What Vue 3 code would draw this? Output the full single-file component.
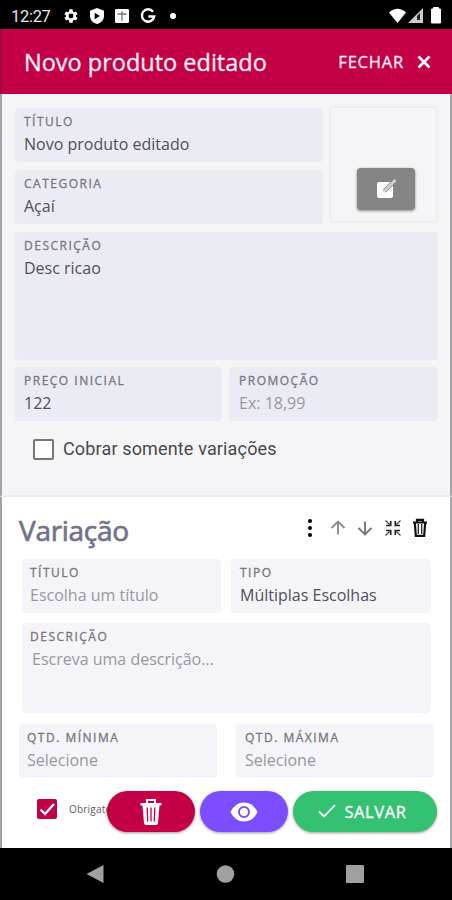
<template>
    <div class="phone">

        <div class="status-bar">
            <span class="clock">12:27</span>
            <svg class="status-icon" viewBox="0 0 24 24">
                <path fill="#fff" fill-rule="evenodd" d="M19.4 13l.1-1-.1-1 2.4-1.8-2.3-4-2.8 1.2-1.8-1L14.500 2h-5l-.4 3.400-1.800 1L4.500 5.200l-2.300 4L4.600 11l-.1 1 .1 1-2.400 1.800 2.300 4 2.800-1.200 1.800 1 .4 3.400h5l.4-3.400 1.800-1 2.800 1.200 2.300-4zM12 15.700a3.700 3.700 0 1 1 0-7.400 3.700 3.700 0 0 1 0 7.400z" />
            </svg>
            <svg class="status-icon" viewBox="0 0 24 24">
                <path fill="#fff" fill-rule="evenodd" d="M12 0L1.500 4v8c0 6 4.500 10.500 10.500 12 6-1.500 10.500-6 10.500-12V4zM8.500 7l8 5-8 5z" />
            </svg>
            <svg class="status-icon" viewBox="0 0 24 24">
                <rect x="1.500" y="1.500" width="21" height="21" rx="2" fill="#fff" />
                <path d="M5 9h14M12 5v14" stroke="#777" stroke-width="2" />
            </svg>
            <svg class="status-icon" viewBox="0 0 24 24">
                <path d="M19.500 5.500A9.300 9.300 0 1 0 21.300 12.800H12.500" fill="none" stroke="#fff" stroke-width="3.600" />
            </svg>
            <span class="status-dot"></span>
            <svg class="signals" viewBox="0 0 54 18">
                <path d="M0 5.500Q8.500-2 17 5.500L8.500 16z" fill="#fff" />
                <path d="M19 16L34 1V16z" fill="#ccc" />
                <path d="M28 13V9l3-3v7z" fill="#222" />
                <path d="M42.500 2h2V.5h5V2h2v14h-9z" fill="#fff" stroke="#fff" stroke-linejoin="round" />
            </svg>
        </div>

        <header class="header">
            <h1>Novo produto editado</h1>
            <button class="close">
                <span>FECHAR</span>
                <svg width="14" height="14" viewBox="0 0 14 14">
                    <path d="M1.500 1.500l11 11M12.500 1.500l-11 11" stroke="#fff" stroke-width="2.600" />
                </svg>
            </button>
        </header>

        <section class="product">
            <div class="top-row">
                <div class="column">
                    <div v-for="field in mainFields" :key="field.label" class="field">
                        <label>{{ field.label }}</label>
                        <p>{{ field.value }}</p>
                    </div>
                </div>
                <div class="picture">
                    <button class="edit">
                        <svg width="22" height="22" viewBox="0 0 22 22">
                            <rect x="2" y="4" width="16" height="16" rx="2" fill="#fff" />
                            <path d="M9.500 13L19 3.500" stroke="#858585" stroke-width="4.200" />
                            <path d="M8.500 14L20.500 2" stroke="#d4d4d4" stroke-width="2.600" />
                        </svg>
                    </button>
                </div>
            </div>
            <div class="field tall">
                <label>DESCRIÇÃO</label>
                <p>Desc ricao</p>
            </div>
            <div class="prices">
                <div v-for="field in priceFields" :key="field.label" class="field">
                    <label>{{ field.label }}</label>
                    <p :class="{ placeholder: !field.value }">{{ field.value || field.placeholder }}</p>
                </div>
            </div>
            <div class="only-variations">
                <span class="checkbox"></span>
                <span>Cobrar somente variações</span>
            </div>
        </section>

        <section class="variation">
            <div class="variation-head">
                <h2>Variação</h2>
                <div class="tools">
                    <svg viewBox="0 0 20 20">
                        <circle cx="10" cy="3" r="2" /><circle cx="10" cy="10" r="2" /><circle cx="10" cy="17" r="2" />
                    </svg>
                    <svg viewBox="0 0 20 20">
                        <path d="M10 16.500V4M3.500 10L10 3.500l6.500 6.500" fill="none" stroke="#8c8c8c" stroke-width="1.900" />
                    </svg>
                    <svg viewBox="0 0 20 20">
                        <path d="M10 3.500V16M3.500 10l6.500 6.500 6.500-6.500" fill="none" stroke="#777" stroke-width="1.900" />
                    </svg>
                    <svg viewBox="0 0 20 20">
                        <path d="M3 7.500h4.700V3M17 7.500h-4.700V3M3 12.500h4.700V17M17 12.500h-4.700V17" fill="none" stroke="#222" stroke-width="1.700" />
                        <path d="M2.500 2.500l5 5M17.500 2.500l-5 5M2.500 17.500l5-5M17.500 17.500l-5-5" stroke="#444" stroke-width="1.200" />
                    </svg>
                    <svg viewBox="0 0 20 20">
                        <path d="M3 4.500h14M7 4V1.800h6V4M4.800 5l1 12.800h8.400l1-12.800" fill="none" stroke="#111" stroke-width="2.200" />
                        <path d="M8.300 6v10M11.700 6v10" stroke="#333" stroke-width="1.400" />
                    </svg>
                </div>
            </div>
            <div class="variation-row">
                <div class="field light">
                    <label>TÍTULO</label>
                    <p class="placeholder">Escolha um título</p>
                </div>
                <div class="field light type">
                    <label>TIPO</label>
                    <p>Múltiplas Escolhas</p>
                </div>
            </div>
            <div class="field light description">
                <label>DESCRIÇÃO</label>
                <p class="placeholder">Escreva uma descrição...</p>
            </div>
            <div class="quantities">
                <div v-for="label in quantities" :key="label" class="field light">
                    <label>{{ label }}</label>
                    <p class="placeholder">Selecione</p>
                </div>
            </div>
            <div class="required">
                <span class="checkbox checked">
                    <svg width="20" height="20" viewBox="0 0 20 20">
                        <path d="M3.500 10.500l4.500 4.500L17 5" fill="none" stroke="#fff" stroke-width="2.300" />
                    </svg>
                </span>
                <span>Obrigatório</span>
            </div>
        </section>

        <div class="actions">
            <button class="pill delete">
                <svg width="24" height="28" viewBox="0 0 24 28">
                    <path d="M1.500 5h21v2.500h-2L19 25q-.2 2-2 2H7q-1.800 0-2-2L3.500 7.500h-2z" fill="#fff" />
                    <path d="M8 5V2h8v3" fill="none" stroke="#fff" stroke-width="2" />
                    <path d="M8.200 9.500l.5 14M12 9.500v14M15.800 9.500l-.5 14" stroke="#c30046" stroke-width="1.300" />
                </svg>
            </button>
            <button class="pill preview">
                <svg width="28" height="20" viewBox="0 0 28 20">
                    <path d="M.5 10Q5 .5 14 .5T27.500 10Q23 19.500 14 19.500T.5 10z" fill="#fff" />
                    <circle cx="14" cy="10" r="5" fill="none" stroke="#7c4dff" stroke-width="2" />
                </svg>
            </button>
            <button class="pill save">
                <svg width="18" height="16" viewBox="0 0 18 16">
                    <path d="M1 8.500l5 5L17 2" fill="none" stroke="#fff" stroke-width="1.800" />
                </svg>
                <span>SALVAR</span>
            </button>
        </div>

        <nav class="nav-bar">
            <svg width="20" height="20" viewBox="0 0 20 20"><path d="M1.500 10L18.500 1v18z" /></svg>
            <svg width="20" height="20" viewBox="0 0 20 20"><circle cx="10.500" cy="10" r="8.800" /></svg>
            <svg width="20" height="20" viewBox="0 0 20 20"><rect x="1" y="1" width="18" height="18" rx="1" /></svg>
        </nav>

    </div>
</template>


<script setup>
    import { ref } from "vue";

    const mainFields = ref([
        { label: "TÍTULO", value: "Novo produto editado" },
        { label: "CATEGORIA", value: "Açaí" },
    ]);
    const priceFields = ref([
        { label: "PREÇO INICIAL", value: "122" },
        { label: "PROMOÇÃO", value: "", placeholder: "Ex: 18,99" },
    ]);
    const quantities = ["QTD. MÍNIMA", "QTD. MÁXIMA"];
</script>


<style>
body {
    background: #000;
}
</style>

<style scoped>
* {
    box-sizing: border-box;
}
.phone {
    position: relative;
    width: 452px;
    height: 900px;
    overflow: hidden;
    display: flex;
    flex-direction: column;
    background: #000;
    font-family: "Open Sans", "Noto Sans", sans-serif;
}
svg {
    display: block;
    flex: none;
}
h1, h2, p {
    margin: 0;
    font-weight: 400;
}
button {
    border: 0;
    padding: 0;
    font-family: inherit;
    color: #fff;
    display: flex;
    align-items: center;
    justify-content: center;
}

.status-bar {
    height: 29px;
    padding: 3px 9px 0 11px;
    display: flex;
    align-items: center;
    color: #e8e8e8;
}
.clock {
    width: 52px;
    font: 16.5px Roboto, sans-serif;
    letter-spacing: -0.3px;
}
.status-icon {
    width: 16px;
    height: 16px;
    margin-right: 9.500px;
}
.status-dot {
    width: 6px;
    height: 6px;
    margin-left: 5px;
    border-radius: 50%;
    background: #fff;
}
.signals {
    width: 54px;
    height: 18px;
    margin-left: auto;
}

.header {
    height: 65px;
    padding: 0 21px 0 22px;
    border-left: 2px solid #a3063f;
    display: flex;
    align-items: center;
    justify-content: space-between;
    background: #c30046;
    color: #ffeef2;
}
.header h1 {
    font-size: 23.500px;
    line-height: 32px;
    -webkit-text-stroke: 0.3px;
}
.close {
    gap: 13px;
    background: none;
    color: #ffeef2;
    font-size: 16.500px;
    letter-spacing: 0.8px;
    -webkit-text-stroke: 0.3px;
}

.product {
    height: 403px;
    padding: 14px 12px 0 13px;
    border-left: 2px solid #a5a5a7;
    border-right: 2px solid #a5a5a7;
    border-bottom: 2px solid #ececee;
    background: #f5f5f8;
}
.top-row {
    display: flex;
    gap: 6px;
}
.column {
    flex: 1;
    display: flex;
    flex-direction: column;
    gap: 8px;
}
.field {
    height: 54px;
    padding: 5px 9px 0;
    border-radius: 4px;
    background: #ebebf4;
    color: #505057;
}
.field label {
    display: block;
    font-size: 12px;
    line-height: 18px;
    letter-spacing: 1.5px;
    -webkit-text-stroke: 0.3px;
    color: #77777d;
}
.field p {
    font-size: 16px;
    line-height: 22px;
    margin-top: 2px;
    white-space: nowrap;
}
.field .placeholder {
    color: #98989f;
}
.picture {
    width: 109px;
    height: 117px;
    margin-top: -2px;
    padding: 0 0 11px 4px;
    border: 2px solid #eeeeef;
    border-radius: 4px;
    display: flex;
    align-items: flex-end;
    justify-content: center;
}
.edit {
    width: 58px;
    height: 42px;
    border-radius: 4px;
    background: #858585;
    box-shadow: 0 1px 3px rgba(0, 0, 0, 0.45);
}
.tall {
    height: 128px;
    margin-top: 8px;
}
.prices {
    display: grid;
    grid-template-columns: 207px 209px;
    gap: 7px;
    margin-top: 7px;
}
.prices .field:last-child {
    padding-left: 10px;
}
.only-variations {
    display: flex;
    align-items: center;
    gap: 9px;
    margin: 17px 0 0 18px;
    font: 18px/22px Roboto, sans-serif;
    letter-spacing: 0.15px;
    color: #48484c;
}
.checkbox {
    width: 21px;
    height: 21px;
    border: 2px solid #77777a;
    border-radius: 2px;
    background: #fff;
}

.variation {
    height: 351px;
    padding: 15px 15px 0 17px;
    border-left: 2px solid #a5a5a7;
    border-right: 2px solid #a5a5a7;
    background: #fff;
}
.variation-head {
    height: 47px;
    display: flex;
    justify-content: space-between;
}
.variation-head h2 {
    font-size: 28px;
    line-height: 37px;
    letter-spacing: -0.3px;
    -webkit-text-stroke: 0.7px;
    color: #72728b;
}
.tools {
    display: flex;
    gap: 7.500px;
    padding: 6px 5px 0 0;
}
.tools svg {
    width: 20px;
    height: 20px;
}
.light {
    background: #f4f4f9;
}
.variation-row {
    display: grid;
    grid-template-columns: 199px 200px;
    gap: 10px;
    margin-left: 3px;
}
.field.light {
    padding-left: 8px;
}
.field.type {
    padding-left: 9px;
}
.description {
    width: 409px;
    height: 90px;
    margin: 10px 0 0 3px;
}
.description p {
    padding-left: 2px;
}
.quantities {
    display: grid;
    grid-template-columns: 198px 198px;
    gap: 19px;
    margin-top: 11px;
}
.quantities .field:last-child {
    padding-left: 9px;
}
.required {
    display: flex;
    align-items: center;
    gap: 12px;
    margin: 21px 0 0 18px;
    font-size: 10px;
    letter-spacing: 0.2px;
    color: #5c5c62;
}
.checked {
    width: 20px;
    height: 20px;
    border: 0;
    background: #c30046;
}

/* floating buttons above the end of the form */
.actions {
    position: absolute;
    left: 107px;
    top: 791px;
    display: flex;
    gap: 5px;
}
.pill {
    width: 88px;
    height: 41px;
    border-radius: 21px;
    box-shadow: 0 1px 3px rgba(0, 0, 0, 0.4);
}
.delete {
    background: #c30046;
}
.preview {
    background: #7c4dff;
}
.save {
    width: 144px;
    gap: 8px;
    padding: 0 5px 1px 0;
    background: #35c172;
    font-size: 16.500px;
    letter-spacing: 0.6px;
    -webkit-text-stroke: 0.3px;
}

.nav-bar {
    height: 52px;
    padding: 0 87px 0 85px;
    display: flex;
    align-items: center;
    justify-content: space-between;
    fill: #a0a0a0;
}
</style>
